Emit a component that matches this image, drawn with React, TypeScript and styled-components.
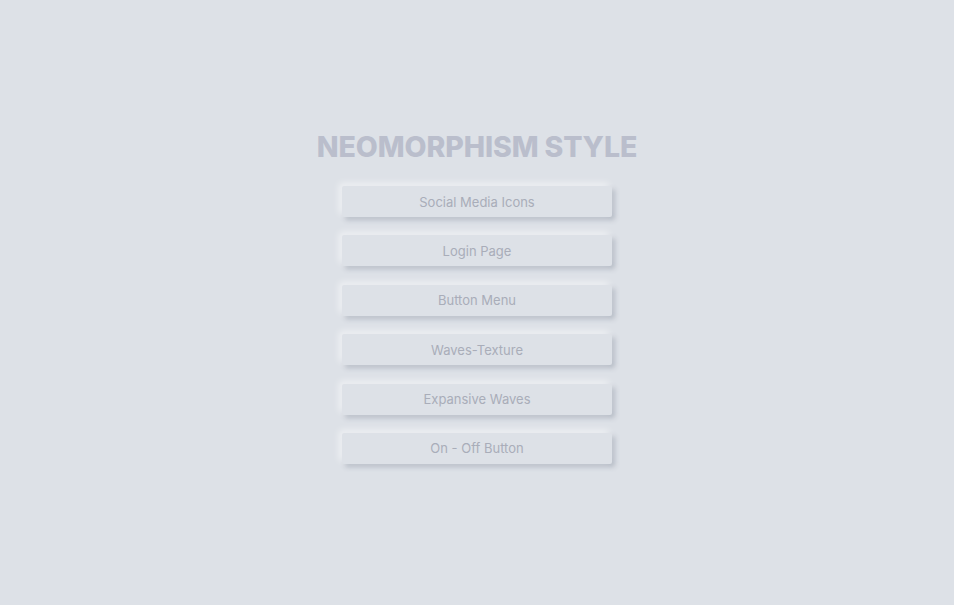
import React from "react";
import styled, { createGlobalStyle } from "styled-components";

const Global = createGlobalStyle`
  html, body { margin: 0; padding: 0; background: #dde1e7; }
  body { font-family: Inter, "Noto Sans", sans-serif; }
`;

const Page = styled.div`
  width: 954px;
  height: 605px;
  background: #dde1e7;
  display: flex;
  flex-direction: column;
  align-items: center;
  padding-top: 129px;
  box-sizing: border-box;
`;

const Title = styled.h1`
  margin: 0 0 21px 0;
  font-family: Inter, "Noto Sans", sans-serif;
  font-weight: 800;
  font-size: 28.5px;
  line-height: 36px;
  letter-spacing: -0.1px;
  color: #babecc;
`;

const List = styled.div`
  display: flex;
  flex-direction: column;
  gap: 18.4px;
`;

const Item = styled.div`
  width: 270px;
  height: 31px;
  background: #dde1e7;
  border-radius: 2px;
  box-shadow: -3px -3px 7px rgba(255, 255, 255, 0.55),
    3px 3px 5px rgba(94, 104, 121, 0.3);
  display: flex;
  align-items: center;
  justify-content: center;
  font-family: Inter, "Noto Sans", sans-serif;
  font-size: 13px;
  color: #a9adb9;
`;

const items = [
  "Social Media Icons",
  "Login Page",
  "Button Menu",
  "Waves-Texture",
  "Expansive Waves",
  "On - Off Button",
];

export default function App() {
  return (
    <Page>
      <Global />
      <Title>NEOMORPHISM STYLE</Title>
      <List>
        {items.map((t) => (
          <Item key={t}>{t}</Item>
        ))}
      </List>
    </Page>
  );
}
